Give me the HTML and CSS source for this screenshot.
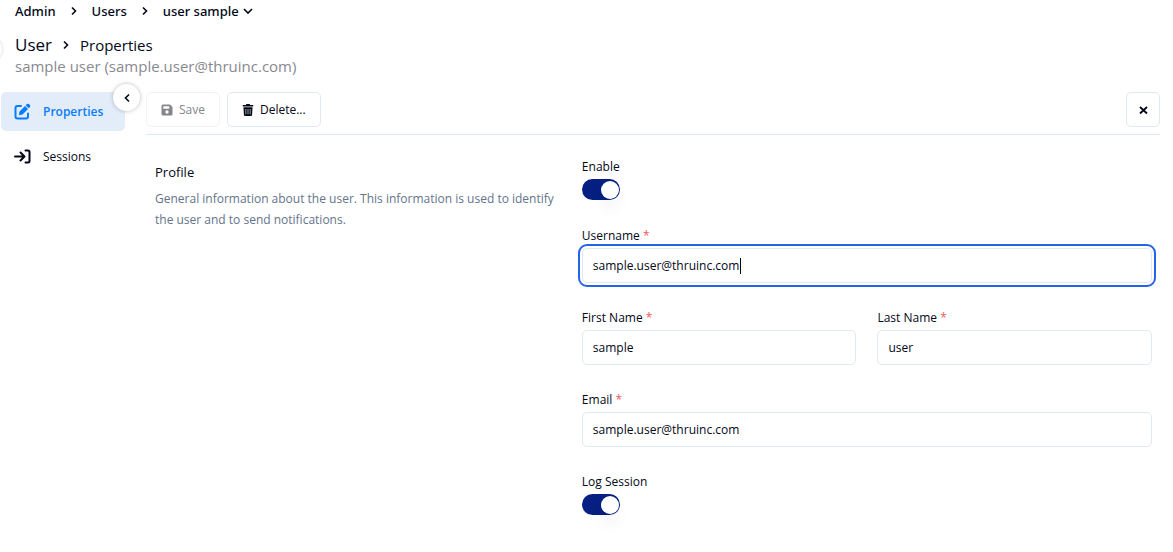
FILE: index.html
```html
<!DOCTYPE html>
<html lang="en">
<head>
<meta charset="utf-8">
<meta name="viewport" content="width=device-width, initial-scale=1">
<title>User Properties</title>
<link rel="stylesheet" href="styles.css">
</head>
<body>
<header class="page-header">
  <nav class="breadcrumb" aria-label="Breadcrumb">
    <a href="#admin">Admin</a>
    <svg class="chevron" viewBox="0 0 8 10"><path d="M2 1.500L5.500 5 2 8.500"/></svg>
    <a href="#users">Users</a>
    <svg class="chevron" viewBox="0 0 8 10"><path d="M2 1.500L5.500 5 2 8.500"/></svg>
    <button class="crumb-menu" type="button">user sample<svg class="chevron-down" viewBox="0 0 10 8"><path d="M1 2l4 4 4-4"/></svg></button>
  </nav>
  <h1 class="title"><span class="title-main">User</span><svg class="chevron" viewBox="0 0 8 10"><path d="M2 1.500L5.500 5 2 8.500"/></svg><span>Properties</span></h1>
  <p class="subtitle">sample user (sample.user@thruinc.com)</p>
  <span class="edge-handle"></span>
</header>
<div class="layout">
  <nav class="sidebar" aria-label="User">
    <a class="side-link active" href="#properties"><svg class="side-icon" viewBox="0 0 17 17"><path d="M7 3H3.500Q1.500 3 1.500 5v8.500Q1.500 15.500 3.500 15.500H12q2 0 2-2V10.500" fill="none" stroke="currentColor" stroke-width="2" stroke-linecap="round"/><path d="M5.500 8.500L11 3l3 3-5.500 5.500-3.700.7zM11.700 2.300l1.200-1.200q1-.9 2 0l1 1q.9 1 0 2l-1.200 1.200z" fill="currentColor"/></svg>Properties</a>
    <a class="side-link" href="#sessions"><svg class="side-icon" viewBox="0 0 17 17"><path d="M1 8.500h9M6.500 4.500l4 4-4 4M11.500 2.500H14q1.500 0 1.500 1.500v9q0 1.500-1.500 1.500h-2.500" fill="none" stroke="currentColor" stroke-width="2" stroke-linecap="round" stroke-linejoin="round"/></svg>Sessions</a>
    <button class="collapse" type="button" aria-label="Collapse sidebar"><svg class="chevron" viewBox="0 0 8 10"><path d="M6 1.500L2.500 5 6 8.500"/></svg></button>
  </nav>
  <main class="content">
    <div class="toolbar">
      <button class="btn" type="button" disabled><svg class="btn-icon" viewBox="0 0 12 12"><path fill="currentColor" fill-rule="evenodd" d="M2 .5h7L11.500 3v7q0 1.500-1.500 1.500H2Q.5 11.500.5 10V2Q.5.5 2 .5zM2.300 2.300v2.400h6V2.300zM6 6.300a1.700 1.700 0 100 3.400 1.700 1.700 0 000-3.400z"/></svg>Save</button>
      <button class="btn" type="button"><svg class="btn-icon" viewBox="0 0 12 12"><path fill="currentColor" fill-rule="evenodd" d="M.8 1h3l.6-1h3.200l.6 1h3v1.500H.8zM1.500 3.300h9l-.4 7.500q-.1 1.200-1.200 1.200H3.100q-1.100 0-1.200-1.200zM3.600 5v5.300h.6V5zm2.100 0v5.300h.6V5zm2.100 0v5.300h.6V5z"/></svg>Delete...</button>
      <button class="btn close" type="button" aria-label="Close"><svg class="close-icon" viewBox="0 0 10 10"><path d="M2 2l7 6.500M9 2L2 8.500"/></svg></button>
    </div>
    <section class="section">
      <div class="intro">
        <h2>Profile</h2>
        <p>General information about the user. This information is used to identify the user and to send notifications.</p>
      </div>
      <form class="form">
        <div class="field">
          <label for="enable">Enable</label>
          <input class="switch" id="enable" type="checkbox" role="switch" checked>
        </div>
        <div class="field">
          <label for="username">Username <span class="required">*</span></label>
          <div class="input-wrap focused"><input class="input" id="username" type="text" value="sample.user@thruinc.com"><span class="caret"></span></div>
        </div>
        <div class="pair">
          <div class="field">
            <label for="first">First Name <span class="required">*</span></label>
            <input class="input" id="first" type="text" value="sample">
          </div>
          <div class="field">
            <label for="last">Last Name <span class="required">*</span></label>
            <input class="input" id="last" type="text" value="user">
          </div>
        </div>
        <div class="field">
          <label for="email">Email <span class="required">*</span></label>
          <input class="input" id="email" type="email" value="sample.user@thruinc.com">
        </div>
        <div class="field">
          <label for="log">Log Session</label>
          <input class="switch" id="log" type="checkbox" role="switch" checked>
        </div>
      </form>
    </section>
  </main>
</div>
</body>
</html>
```
FILE: styles.css
```css
* { box-sizing: border-box; }
body {
  margin: 0;
  background: #fff;
  color: #020817;
  font: 500 12px/18px "Open Sans", "Noto Sans", sans-serif;
}
a { color: inherit; text-decoration: none; }
button, input { font: inherit; color: inherit; }
h1, h2, p { margin: 0; font-weight: 500; }
svg { flex: none; }

.chevron { width: 8px; height: 10px; }
.chevron-down { width: 10px; height: 8px; }
.chevron path, .chevron-down path {
  fill: none;
  stroke: #020817;
  stroke-width: 1.6;
}

.page-header { position: relative; padding: 1px 15px 0; }
.breadcrumb {
  display: flex;
  align-items: center;
  gap: 14px;
  font-family: "Noto Sans", "Open Sans", sans-serif;
  font-size: 13px;
  line-height: 20px;
}
.crumb-menu {
  display: flex;
  align-items: center;
  gap: 4px;
  padding: 0;
  border: 0;
  background: none;
}
.title {
  display: flex;
  align-items: center;
  gap: 10px;
  margin-top: 13px;
  font-size: 15px;
  line-height: 22px;
}
.title-main { font-size: 17px; }
.subtitle {
  color: #88898f;
  font-size: 15px;
  font-weight: 400;
  line-height: 20px;
}
.edge-handle {
  position: absolute;
  top: 36px;
  left: -24px;
  width: 26px;
  height: 26px;
  border-radius: 50%;
  background: #fff;
  box-shadow: 0 0 3px #0003;
}

.layout {
  display: grid;
  grid-template-columns: 124px minmax(0, 1fr);
  gap: 21px;
  padding: 16px 13px 0 1px;
}
.sidebar {
  position: relative;
  display: flex;
  flex-direction: column;
  gap: 6px;
}
.side-link {
  display: flex;
  align-items: center;
  gap: 12px;
  height: 39px;
  padding-left: 13px;
  border-radius: 5px;
}
.side-link.active { background: #e3edfa; color: #087cfc; font-weight: 600; }
.side-icon { width: 17px; height: 17px; }
.collapse {
  position: absolute;
  top: -8px;
  right: -15px;
  display: grid;
  place-items: center;
  width: 27px;
  height: 27px;
  padding: 0;
  border: 0;
  border-radius: 50%;
  background: #fff;
  box-shadow: 0 0 4px #0004;
}

.toolbar {
  display: flex;
  gap: 7px;
  padding-bottom: 7px;
  border-bottom: 1px solid #dfe7ef;
}
.btn {
  display: flex;
  align-items: center;
  gap: 6px;
  height: 35px;
  padding: 0 14px;
  border: 1px solid #e2e8f0;
  border-radius: 5px;
  background: #fff;
}
.btn:disabled { color: #85868d; border-color: #f0f3f8; }
.btn-icon { width: 12px; height: 12px; }
.close { justify-content: center; width: 34px; padding: 0; margin-left: auto; }
.close-icon { width: 10px; height: 10px; }
.close-icon path { stroke: #020817; stroke-width: 1.8; }

.section {
  display: grid;
  grid-template-columns: 42fr 58fr;
  gap: 14px;
  padding: 23px 8px 22px 9px;
}
.intro { padding-top: 4px; }
.intro h2 { font-size: 13px; line-height: 20px; }
.intro p {
  margin-top: 6px;
  color: #64748b;
  font-weight: 400;
  line-height: 21px;
}
.form { display: flex; flex-direction: column; gap: 26px; }
.field { display: flex; flex-direction: column; gap: 3px; }
.pair { display: grid; grid-template-columns: 1fr 1fr; gap: 21px; }
.required { color: #ef5a5a; font-weight: 400; }
.input-wrap { position: relative; display: flex; }
.input {
  width: 100%;
  height: 35px;
  padding: 0 10px;
  border: 1px solid #e2e8f0;
  border-radius: 5px;
  background: #fff;
  outline: none;
  font-weight: 400;
}
.focused .input { outline: 2px solid #2563eb; outline-offset: 2px; }
.caret {
  position: absolute;
  top: 10px;
  left: 158px;
  width: 1px;
  height: 16px;
  background: #000;
}
.switch {
  appearance: none;
  display: flex;
  align-items: center;
  width: 38px;
  height: 21px;
  margin: 0 0 1px;
  padding: 0 1px;
  border-radius: 11px;
  background: #cbd5e1;
}
.switch::before {
  content: "";
  width: 18px;
  height: 18px;
  border-radius: 50%;
  background: #fff;
  box-shadow: 0 10px 15px #0000000d;
}
.switch:checked { justify-content: flex-end; background: #051f82; }
```
